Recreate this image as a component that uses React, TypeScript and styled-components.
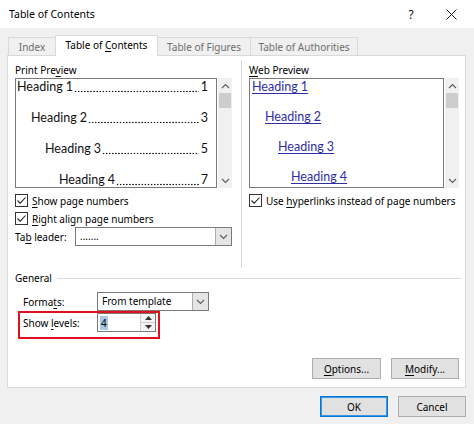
import React from 'react';
import styled, { createGlobalStyle, css } from 'styled-components';

const GlobalStyle = createGlobalStyle`
  html, body {
    margin: 0;
    padding: 0;
    background: #f0f0f0;
  }
  body {
    font-family: "Segoe UI", "Noto Sans", "Open Sans", sans-serif;
  }
`;

const Dialog = styled.div`
  width: 474px;
  height: 424px;
  background: #f0f0f0;
  display: flex;
  flex-direction: column;
  overflow: hidden;
  font-size: 10px;
  color: #000;
`;

const TitleBar = styled.div`
  height: 28px;
  flex: none;
  display: flex;
  align-items: center;
  background: #fff;
  padding: 0 3px 0 9px;
`;

const Title = styled.div`
  flex: 1;
  font-size: 10.5px;
`;

const TitleButton = styled.div`
  width: 40px;
  height: 28px;
  display: flex;
  align-items: center;
  justify-content: center;
  font-size: 12px;
  color: #111;
`;

const TabStrip = styled.div`
  height: 27px;
  flex: none;
  display: flex;
  align-items: flex-end;
  padding-left: 8px;
`;

const Tab = styled.div<{ $w: number; $active?: boolean }>`
  width: ${p => p.$w}px;
  height: 18px;
  box-sizing: border-box;
  border: 1px solid #d9d9d9;
  border-bottom: none;
  margin-right: -1px;
  display: flex;
  align-items: center;
  justify-content: center;
  color: #6d6d6d;
  background: #f0f0f0;
  white-space: nowrap;
  ${p =>
    p.$active &&
    css`
      height: 21px;
      margin-bottom: -1px;
      padding-bottom: 2px;
      background: #fff;
      color: #000;
      position: relative;
    `}
`;

const Key = styled.span`
  text-decoration: underline;
  text-underline-offset: 2px;
`;

const Panel = styled.div`
  height: 333px;
  flex: none;
  box-sizing: border-box;
  margin: 0 8px 0 7px;
  background: #fff;
  border: 1px solid #d9d9d9;
  padding: 7px 6px 0 7px;
  display: flex;
  flex-direction: column;
`;

const TopSection = styled.div`
  height: 205px;
  display: grid;
  grid-template-columns: 217px minmax(0, 1fr);
`;

const Column = styled.div`
  display: flex;
  flex-direction: column;
  min-width: 0;
`;

const RightColumn = styled(Column)`
  margin-left: 9px;
  margin-top: -3px;
  padding-top: 3px;
  border-left: 1px solid #dadada;
  padding-left: 7px;
`;

const GroupLabel = styled.div`
  height: 15px;
  line-height: 15px;
`;

const PreviewRow = styled.div`
  height: 110px;
  display: grid;
  grid-template-columns: minmax(0, 1fr) 14px;
  column-gap: 1px;
`;

const PreviewBox = styled.div`
  box-sizing: border-box;
  border: 1px solid #7a7a7a;
  overflow: hidden;
  font-family: "Lato", "Noto Sans", sans-serif;
  font-size: 12.5px;
  color: #111;
`;

const PrintEntry = styled.div<{ $level: number }>`
  display: flex;
  height: 16px;
  line-height: 16px;
  margin-bottom: 15px;
  padding-left: ${p => p.$level * 14 + 1}px;
  padding-right: 8px;
  white-space: nowrap;
`;

const Leader = styled.span`
  flex: 1;
  margin: 0 2px 0 1px;
  background-image: radial-gradient(circle, #1a1a1a 0.75px, rgba(0, 0, 0, 0) 1.1px);
  background-size: 3.1px 3px;
  background-repeat: repeat-x;
  background-position: 0 10.6px;
`;

const WebEntry = styled.div<{ $level: number }>`
  height: 16px;
  line-height: 16px;
  margin-bottom: 14px;
  padding-left: ${p => p.$level * 13 + 2}px;
  white-space: nowrap;
`;

const Link = styled.span`
  color: #2e2eaa;
  text-decoration: underline;
  text-underline-offset: 2px;
`;

const ScrollBar = styled.div`
  background: #f0f0f0;
  display: flex;
  flex-direction: column;
`;

const ScrollArrow = styled.div`
  height: 15px;
  display: flex;
  align-items: center;
  justify-content: center;
`;

const ScrollThumb = styled.div`
  height: 15px;
  margin: 0 1px;
  background: #cdcdcd;
`;

const ScrollTrack = styled.div`
  flex: 1;
`;

const CheckRow = styled.div<{ $gap?: number }>`
  display: flex;
  align-items: center;
  height: 13px;
  margin-top: ${p => p.$gap ?? 5}px;
  gap: 4px;
  white-space: nowrap;
`;

const CheckBox = styled.div`
  width: 13px;
  height: 13px;
  box-sizing: border-box;
  border: 1px solid #333;
  background: #fff;
  display: flex;
  align-items: center;
  justify-content: center;
  flex: none;
`;

const FieldRow = styled.div<{ $gap?: number }>`
  display: flex;
  align-items: center;
  margin-top: ${p => p.$gap ?? 0}px;
`;

const FieldLabel = styled.div<{ $w: number }>`
  width: ${p => p.$w}px;
  flex: none;
  white-space: nowrap;
`;

const Select = styled.div<{ $w?: number }>`
  display: flex;
  height: 19px;
  box-sizing: border-box;
  border: 1px solid #7a7a7a;
  background: #fff;
  ${p => (p.$w ? `width: ${p.$w}px;` : 'flex: 1;')}
`;

const SelectValue = styled.div`
  flex: 1;
  padding-left: 4px;
  line-height: 17px;
  white-space: nowrap;
`;

const DropButton = styled.div`
  width: 15px;
  background: #e5e5e5;
  border-left: 1px solid #adadad;
  display: flex;
  align-items: center;
  justify-content: center;
`;

const GroupHeader = styled.div`
  margin-top: 4px;
  height: 13px;
  line-height: 13px;
  display: flex;
  align-items: center;
  gap: 5px;
`;

const GroupLine = styled.div`
  flex: 1;
  height: 1px;
  background: #dcdcdc;
  margin-right: -2px;
`;

const GroupBody = styled.div`
  padding-left: 8px;
  display: flex;
  flex-direction: column;
  align-items: flex-start;
`;

const Highlight = styled.div`
  margin-left: -5px;
  border: 2px solid #e0101c;
  padding: 0 2px 5px 3px;
  display: flex;
  align-items: center;
`;

const Spin = styled.div`
  width: 59px;
  height: 19px;
  box-sizing: border-box;
  border: 1px solid #7a7a7a;
  background: #fff;
  display: flex;
`;

const SpinValue = styled.div`
  flex: 1;
  padding-left: 2px;
  display: flex;
  align-items: center;
`;

const Selected = styled.span`
  background: #a9c8e8;
  line-height: 14px;
  padding: 0 1px;
`;

const SpinButtons = styled.div`
  width: 14px;
  display: flex;
  flex-direction: column;
  border-left: 1px solid #d0d0d0;
`;

const SpinButton = styled.div`
  flex: 1;
  display: flex;
  align-items: center;
  justify-content: center;
  background: #f4f4f4;
  & + & {
    border-top: 1px solid #d0d0d0;
  }
`;

const ButtonRow = styled.div<{ $pad?: string }>`
  display: flex;
  justify-content: flex-end;
  gap: 10px;
  padding: ${p => p.$pad ?? '0'};
`;

const PanelButtons = styled(ButtonRow)`
  margin-top: auto;
  margin-bottom: 8px;
`;

const Button = styled.div<{ $default?: boolean; $w?: number }>`
  width: ${p => p.$w ?? 68}px;
  height: 21px;
  box-sizing: border-box;
  border: 1px solid #adadad;
  background: #e1e1e1;
  display: flex;
  align-items: center;
  justify-content: center;
  white-space: nowrap;
  ${p =>
    p.$default &&
    css`
      border-color: #0078d7;
      box-shadow: inset 0 0 0 1px #3c96e0;
    `}
`;

const Chevron = ({ up }: { up?: boolean }) => (
  <svg width="9" height="6" viewBox="0 0 9 6">
    <path
      d={up ? 'M1 5 L4.5 1.5 L8 5' : 'M1 1 L4.5 4.5 L8 1'}
      fill="none"
      stroke="#606060"
      strokeWidth="1.2"
    />
  </svg>
);

const Tick = () => (
  <svg width="11" height="11" viewBox="0 0 11 11">
    <path d="M1.5 5.5 L4.2 8.2 L9.5 2.5" fill="none" stroke="#222" strokeWidth="1.1" />
  </svg>
);

const Triangle = ({ up }: { up?: boolean }) => (
  <svg width="7" height="4" viewBox="0 0 7 4">
    <path d={up ? 'M0 4 L3.5 0 L7 4 Z' : 'M0 0 L3.5 4 L7 0 Z'} fill="#333" />
  </svg>
);

const Scroller = () => (
  <ScrollBar>
    <ScrollArrow>
      <Chevron up />
    </ScrollArrow>
    <ScrollThumb />
    <ScrollTrack />
    <ScrollArrow>
      <Chevron />
    </ScrollArrow>
  </ScrollBar>
);

const entries = [
  { name: 'Heading 1', page: 1 },
  { name: 'Heading 2', page: 3 },
  { name: 'Heading 3', page: 5 },
  { name: 'Heading 4', page: 7 },
];

export default function App() {
  return (
    <Dialog>
      <GlobalStyle />
      <TitleBar>
        <Title>Table of Contents</Title>
        <TitleButton>?</TitleButton>
        <TitleButton>
          <svg width="11" height="11" viewBox="0 0 11 11">
            <path d="M0.5 0.5 L10.5 10.5 M10.5 0.5 L0.5 10.5" stroke="#222" strokeWidth="1" />
          </svg>
        </TitleButton>
      </TitleBar>

      <TabStrip>
        <Tab $w={48}>Index</Tab>
        <Tab $w={103} $active>
          <span>
            Table of <Key>C</Key>ontents
          </span>
        </Tab>
        <Tab $w={94}>Table of Figures</Tab>
        <Tab $w={108}>Table of Authorities</Tab>
      </TabStrip>

      <Panel>
        <TopSection>
          <Column>
            <GroupLabel>
              Print Pre<Key>v</Key>iew
            </GroupLabel>
            <PreviewRow>
              <PreviewBox>
                {entries.map((e, i) => (
                  <PrintEntry key={e.name} $level={i}>
                    <span>{e.name}</span>
                    <Leader />
                    <span>{e.page}</span>
                  </PrintEntry>
                ))}
              </PreviewBox>
              <Scroller />
            </PreviewRow>
            <CheckRow $gap={6}>
              <CheckBox>
                <Tick />
              </CheckBox>
              <span>
                <Key>S</Key>how page numbers
              </span>
            </CheckRow>
            <CheckRow>
              <CheckBox>
                <Tick />
              </CheckBox>
              <span>
                <Key>R</Key>ight align page numbers
              </span>
            </CheckRow>
            <FieldRow $gap={2}>
              <FieldLabel $w={60}>
                Ta<Key>b</Key> leader:
              </FieldLabel>
              <Select>
                <SelectValue>.......</SelectValue>
                <DropButton>
                  <Chevron />
                </DropButton>
              </Select>
            </FieldRow>
          </Column>

          <RightColumn>
            <GroupLabel>
              <Key>W</Key>eb Preview
            </GroupLabel>
            <PreviewRow>
              <PreviewBox>
                {entries.map((e, i) => (
                  <WebEntry key={e.name} $level={i}>
                    <Link>{e.name}</Link>
                  </WebEntry>
                ))}
              </PreviewBox>
              <Scroller />
            </PreviewRow>
            <CheckRow $gap={6}>
              <CheckBox>
                <Tick />
              </CheckBox>
              <span>
                Use <Key>h</Key>yperlinks instead of page numbers
              </span>
            </CheckRow>
          </RightColumn>
        </TopSection>

        <GroupHeader>
          <span>General</span>
          <GroupLine />
        </GroupHeader>
        <GroupBody>
          <FieldRow $gap={7}>
            <FieldLabel $w={74}>
              Forma<Key>t</Key>s:
            </FieldLabel>
            <Select $w={112}>
              <SelectValue>From template</SelectValue>
              <DropButton>
                <Chevron />
              </DropButton>
            </Select>
          </FieldRow>
          <Highlight>
            <FieldLabel $w={74}>
              Show <Key>l</Key>evels:
            </FieldLabel>
            <Spin>
              <SpinValue>
                <Selected>4</Selected>
              </SpinValue>
              <SpinButtons>
                <SpinButton>
                  <Triangle up />
                </SpinButton>
                <SpinButton>
                  <Triangle />
                </SpinButton>
              </SpinButtons>
            </Spin>
          </Highlight>
        </GroupBody>

        <PanelButtons>
          <Button $w={69}>
            <span>
              <Key>O</Key>ptions...
            </span>
          </Button>
          <Button>
            <span>
              <Key>M</Key>odify...
            </span>
          </Button>
        </PanelButtons>
      </Panel>

      <ButtonRow $pad="8px 8px 0 0">
        <Button $default>OK</Button>
        <Button>Cancel</Button>
      </ButtonRow>
    </Dialog>
  );
}
